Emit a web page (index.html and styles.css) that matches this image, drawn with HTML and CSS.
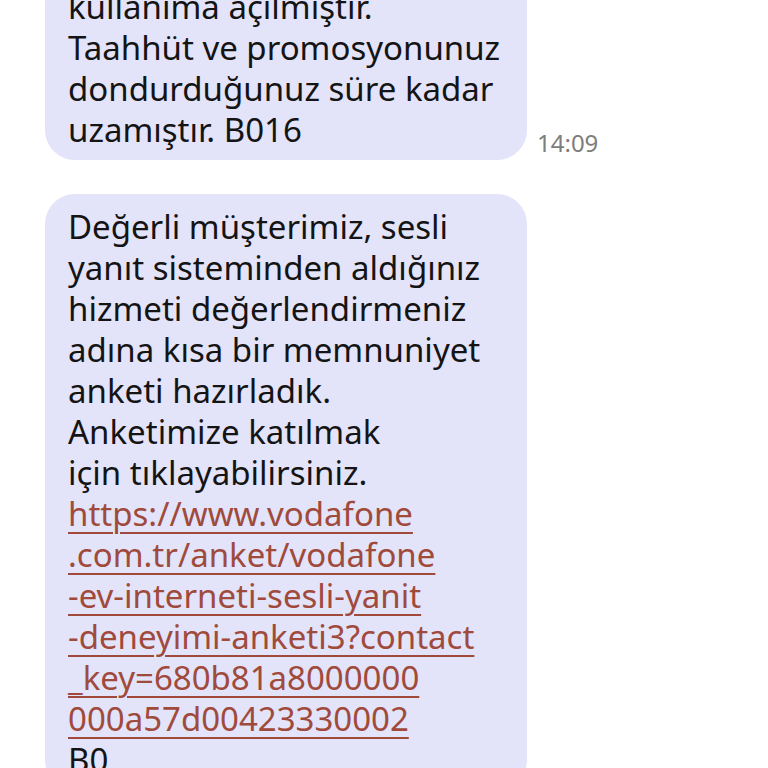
FILE: index.html
```html
<!DOCTYPE html>
<html lang="tr">
<head>
<meta charset="utf-8">
<link rel="stylesheet" href="styles.css">
</head>
<body>
<main class="thread">
  <div class="row">
    <div class="bubble">kullanıma açılmıştır.<br>Taahhüt ve promosyonunuz<br>dondurduğunuz süre kadar<br>uzamıştır. B016</div>
    <span class="time">14:09</span>
  </div>
  <div class="row">
    <div class="bubble">Değerli müşterimiz, sesli<br>yanıt sisteminden aldığınız<br>hizmeti değerlendirmeniz<br>adına kısa bir memnuniyet<br>anketi hazırladık.<br>Anketimize katılmak<br>için tıklayabilirsiniz.<br><a class="link" href="#">https://www.vodafone<br>.com.tr/anket/vodafone<br>-ev-interneti-sesli-yanit<br>-deneyimi-anketi3?contact<br>_key=680b81a8000000<br>000a57d00423330002</a><br>B0</div>
  </div>
</main>
</body>
</html>
```
FILE: styles.css
```css
html, body {
  margin: 0;
  padding: 0;
  background: #ffffff;
  overflow: hidden;
}
body {
  font-family: "Noto Sans", "Open Sans", sans-serif;
}
.thread {
  display: flex;
  flex-direction: column;
  gap: 34px;
  margin-top: -26px;
  padding-left: 45px;
}
.row {
  display: flex;
  align-items: flex-end;
  gap: 10px;
}
.bubble {
  width: 482px;
  box-sizing: border-box;
  background: #e3e3f9;
  border-radius: 30px;
  padding: 12px 10px 10px 23px;
  font-size: 33px;
  line-height: 41px;
  color: #141414;
}
.link {
  color: #a04a3c;
  text-decoration: underline;
  text-decoration-thickness: 2px;
  text-underline-offset: 6px;
}
.time {
  font-size: 24px;
  line-height: 30px;
  color: #7d7d7d;
  margin-bottom: 2px;
}
```
